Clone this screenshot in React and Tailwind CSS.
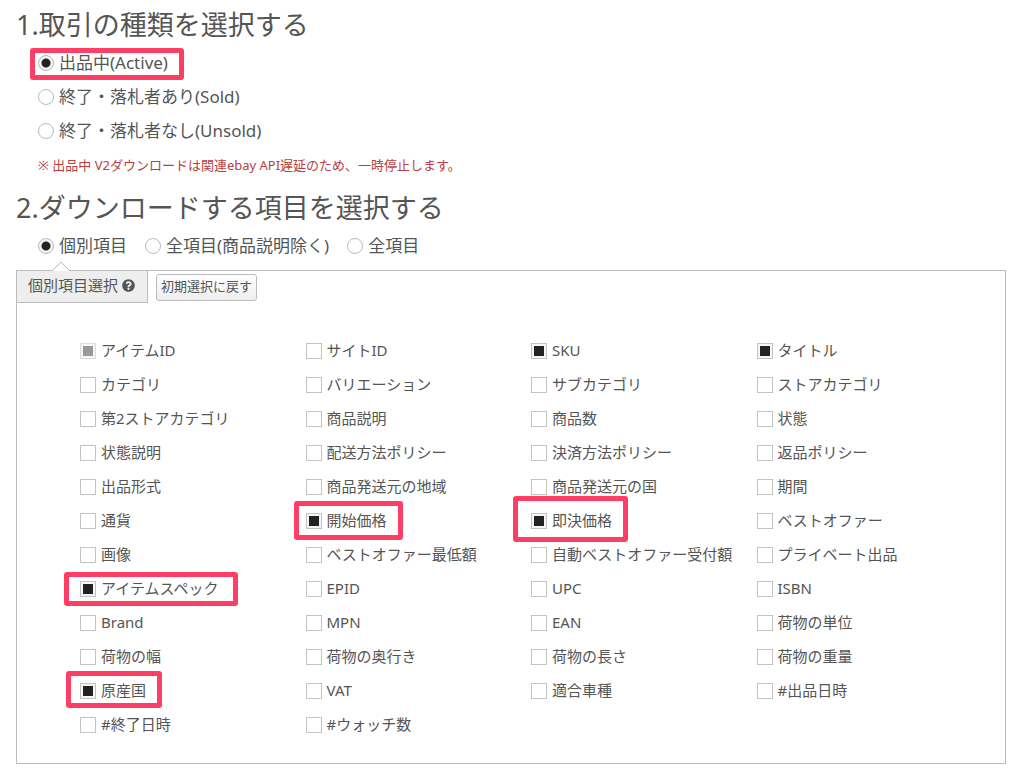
import React, { useState } from 'react';
import { FaQuestionCircle } from 'react-icons/fa';

const TRADE_TYPES = [
  { id: 'active', label: '出品中(Active)', marked: true },
  { id: 'sold', label: '終了・落札者あり(Sold)' },
  { id: 'unsold', label: '終了・落札者なし(Unsold)' },
];

const SCOPES = [
  { id: 'individual', label: '個別項目' },
  { id: 'without-description', label: '全項目(商品説明除く)' },
  { id: 'all', label: '全項目' },
];

// mark: position of the highlight frame around the field
const FIELDS = [
  { label: 'アイテムID', checked: true, disabled: true },
  { label: 'サイトID' },
  { label: 'SKU', checked: true },
  { label: 'タイトル', checked: true },
  { label: 'カテゴリ' },
  { label: 'バリエーション' },
  { label: 'サブカテゴリ' },
  { label: 'ストアカテゴリ' },
  { label: '第2ストアカテゴリ' },
  { label: '商品説明' },
  { label: '商品数' },
  { label: '状態' },
  { label: '状態説明' },
  { label: '配送方法ポリシー' },
  { label: '決済方法ポリシー' },
  { label: '返品ポリシー' },
  { label: '出品形式' },
  { label: '商品発送元の地域' },
  { label: '商品発送元の国' },
  { label: '期間' },
  { label: '通貨' },
  { label: '開始価格', checked: true, mark: '-left-3 -right-4 -top-[7px] -bottom-2' },
  { label: '即決価格', checked: true, mark: '-left-[18px] -right-4 -top-3 -bottom-[10px]' },
  { label: 'ベストオファー' },
  { label: '画像' },
  { label: 'ベストオファー最低額' },
  { label: '自動ベストオファー受付額' },
  { label: 'プライベート出品' },
  { label: 'アイテムスペック', checked: true, mark: '-left-4 -right-5 -top-1 -bottom-[6px]' },
  { label: 'EPID' },
  { label: 'UPC' },
  { label: 'ISBN' },
  { label: 'Brand' },
  { label: 'MPN' },
  { label: 'EAN' },
  { label: '荷物の単位' },
  { label: '荷物の幅' },
  { label: '荷物の奥行き' },
  { label: '荷物の長さ' },
  { label: '荷物の重量' },
  { label: '原産国', checked: true, mark: '-left-[14px] -right-4 -top-[7px] -bottom-[6px]' },
  { label: 'VAT' },
  { label: '適合車種' },
  { label: '#出品日時' },
  { label: '#終了日時' },
  { label: '#ウォッチ数' },
];

const DEFAULTS = FIELDS.filter((field) => field.checked).map((field) => field.label);

const Highlight = ({ className }) => (
  <span className={`absolute pointer-events-none border-[5px] border-[#ff3e66] rounded-[3px] ${className}`} />
);

const Radio = ({ name, option, value, onChange }) => (
  <label className="relative flex items-center gap-[5px] text-[17px] leading-6">
    <input
      type="radio"
      name={name}
      checked={value === option.id}
      onChange={() => onChange(option.id)}
      className="appearance-none size-4 shrink-0 rounded-full border border-[#bbb] bg-white checked:bg-[radial-gradient(circle,#222_4px,#f4f4f4_5px)]"
    />
    {option.label}
    {option.marked && <Highlight className="-left-2 -right-4 -top-[3px] -bottom-[5px]" />}
  </label>
);

const Field = ({ field, checked, onToggle }) => (
  <li className="flex h-[34px] items-center">
    <label className="relative flex items-end gap-[5px] text-[15px] leading-6 whitespace-nowrap">
      <input
        type="checkbox"
        checked={checked}
        disabled={field.disabled}
        onChange={() => onToggle(field.label)}
        className="appearance-none mb-[3px] size-4 shrink-0 border border-[#c3c3c3] bg-white checked:bg-[#222] checked:shadow-[inset_0_0_0_2px_#f6f6f6] disabled:border-[#ddd] disabled:bg-[#999]"
      />
      {field.label}
      {field.mark && <Highlight className={field.mark} />}
    </label>
  </li>
);

const App = () => {
  const [tradeType, setTradeType] = useState('active');
  const [scope, setScope] = useState('individual');
  const [selected, setSelected] = useState(DEFAULTS);

  const toggleField = (label) => {
    setSelected((prev) =>
      prev.includes(label) ? prev.filter((item) => item !== label) : [...prev, label]
    );
  };

  return (
    <main className="bg-white pt-1 pb-3 pl-4 pr-[18px] text-[#555] font-['Noto_Sans','Noto_Sans_CJK_JP',sans-serif]">
      <h2 className="text-[27px] leading-[42px]">1.取引の種類を選択する</h2>
      <div role="radiogroup" aria-label="取引の種類" className="pl-[22px]">
        {TRADE_TYPES.map((option) => (
          <div key={option.id} className="flex h-[34px] items-center">
            <Radio name="tradeType" option={option} value={tradeType} onChange={setTradeType} />
          </div>
        ))}
      </div>
      <p className="pl-[22px] text-[13px] leading-[34px] text-[#b94040]">
        ※ 出品中 V2ダウンロードは関連ebay API遅延のため、一時停止します。
      </p>

      <h2 className="pt-1 text-[27px] leading-[44px]">2.ダウンロードする項目を選択する</h2>
      <div role="radiogroup" aria-label="ダウンロードする項目" className="flex h-8 items-center gap-[18px] pl-[22px]">
        {SCOPES.map((option) => (
          <Radio key={option.id} name="scope" option={option} value={scope} onChange={setScope} />
        ))}
      </div>

      <section className="relative mt-2 border border-[#bbb] pb-[22px]">
        {/* Pointer up to the selected option */}
        <svg className="absolute -top-[10px] left-[34px]" width="20" height="10" viewBox="0 0 20 10">
          <path d="M1 10 L10 1 L19 10" fill="#fff" stroke="#bbb" />
        </svg>
        <div className="flex items-start gap-2">
          <h3 className="flex h-8 items-center gap-1 border-r border-b border-[#bbb] bg-[#eee] pb-[3px] pl-[11px] pr-3 text-[15px]">
            個別項目選択
            <FaQuestionCircle className="size-[13px]" />
          </h3>
          <button
            type="button"
            onClick={() => setSelected(DEFAULTS)}
            className="mt-[3px] h-[27px] rounded-[3px] border border-[#bbb] bg-linear-to-b from-white to-[#eee] px-1 pb-[2px] text-[13px] leading-none"
          >
            初期選択に戻す
          </button>
        </div>
        <ul className="mt-[30px] grid grid-cols-4 pl-[63px] pr-[23px]">
          {FIELDS.map((field) => (
            <Field
              key={field.label}
              field={field}
              checked={selected.includes(field.label)}
              onToggle={toggleField}
            />
          ))}
        </ul>
      </section>
    </main>
  );
};

export default App;
